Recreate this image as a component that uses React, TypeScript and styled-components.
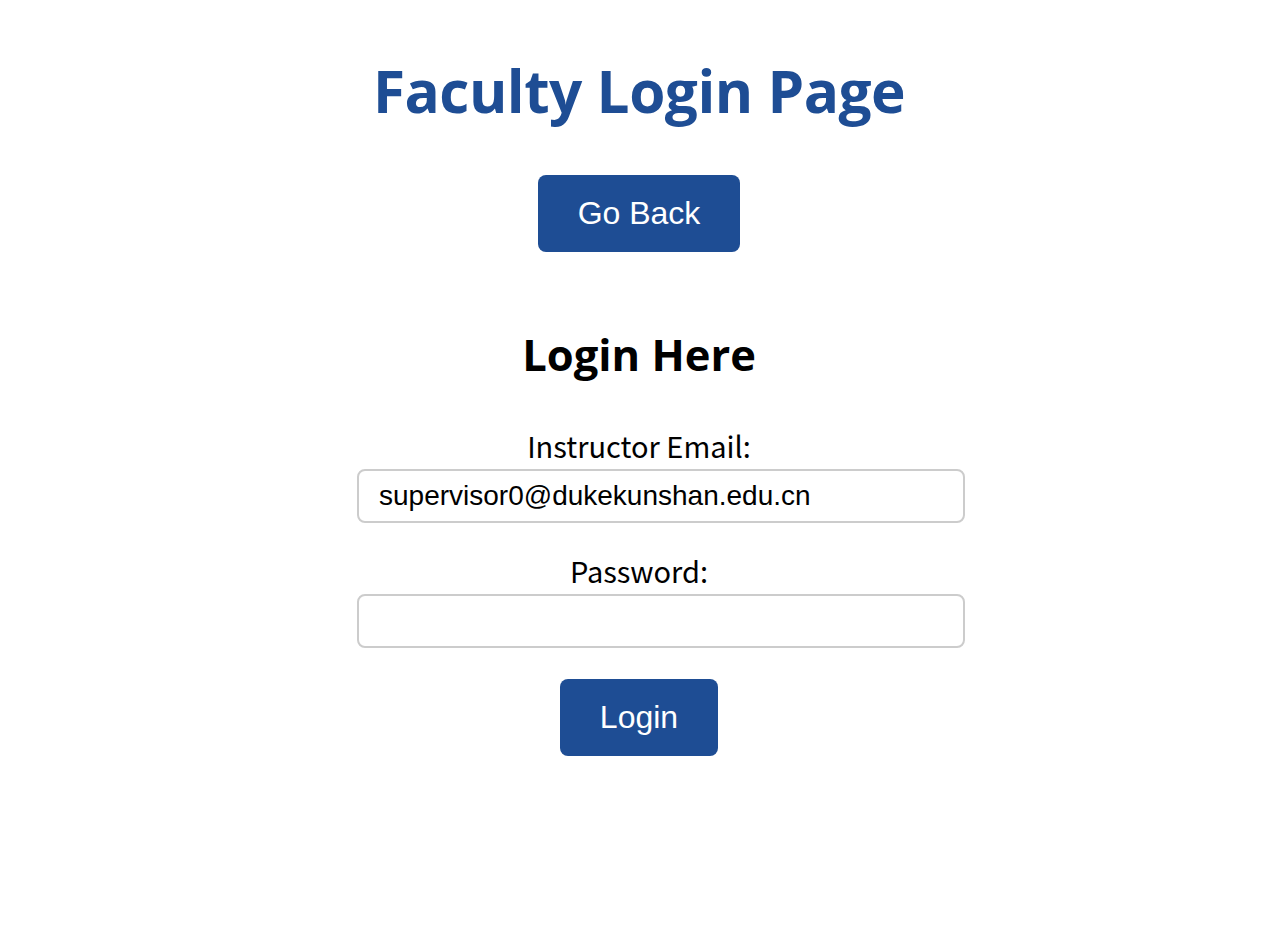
import React from "react";
import styled, { createGlobalStyle } from "styled-components";

const Global = createGlobalStyle`
  html, body { margin: 0; padding: 0; background: #ffffff; }
  body { font-family: "Open Sans", "Noto Sans", sans-serif; }
`;

const Page = styled.div`
  display: flex;
  flex-direction: column;
  align-items: center;
  padding: 50px 0 0 10px;
`;

const Title = styled.h1`
  margin: 0;
  font-family: "Open Sans", "Noto Sans", sans-serif;
  font-weight: 700;
  font-size: 58.5px;
  line-height: 80px;
  color: #1e4d94;
  letter-spacing: -0.5px;
`;

const Button = styled.button<{ $w: number }>`
  width: ${(p) => p.$w}px;
  height: 77px;
  border: none;
  border-radius: 8px;
  background: #1e4d94;
  color: #ffffff;
  font-family: "Liberation Sans", Arial, sans-serif;
  font-size: 32px;
  cursor: pointer;
  padding: 0;
`;

const BackButton = styled(Button)`
  margin-top: 45px;
`;

const Heading = styled.h2`
  margin: 75px 0 0;
  font-family: "Open Sans", "Noto Sans", sans-serif;
  font-weight: 700;
  font-size: 43.5px;
  line-height: 56px;
  color: #000;
`;

const Form = styled.form`
  display: flex;
  flex-direction: column;
  align-items: center;
  width: 564px;
  margin-top: 46px;
`;

const Label = styled.label`
  font-family: "Noto Sans CJK KR", "Noto Sans", sans-serif;
  font-size: 29px;
  line-height: 32px;
  padding-bottom: 8px;
  color: #000;
`;

const Input = styled.input`
  box-sizing: content-box;
  align-self: flex-start;
  width: 564px;
  height: 50px;
  padding: 0 20px;
  margin: 0;
  border: 2px solid #cccccc;
  border-radius: 8px;
  font-family: "Liberation Sans", Arial, sans-serif;
  font-size: 28px;
  color: #000;
  outline: none;
`;

const Field = styled.div<{ $gap: number }>`
  display: flex;
  flex-direction: column;
  align-items: center;
  width: 100%;
  margin-top: ${(p) => p.$gap}px;
`;

const SubmitButton = styled(Button)`
  margin-top: 31px;
`;

export default function App() {
  return (
    <>
      <Global />
      <Page>
        <Title>Faculty Login Page</Title>
        <BackButton $w={202} type="button">Go Back</BackButton>
        <Heading>Login Here</Heading>
        <Form onSubmit={(e) => e.preventDefault()}>
          <Field $gap={0}>
            <Label htmlFor="email">Instructor Email:</Label>
            <Input id="email" type="email" defaultValue="supervisor0@dukekunshan.edu.cn" />
          </Field>
          <Field $gap={31}>
            <Label htmlFor="pw">Password:</Label>
            <Input id="pw" type="password" />
          </Field>
          <SubmitButton $w={158} type="submit">Login</SubmitButton>
        </Form>
      </Page>
    </>
  );
}
